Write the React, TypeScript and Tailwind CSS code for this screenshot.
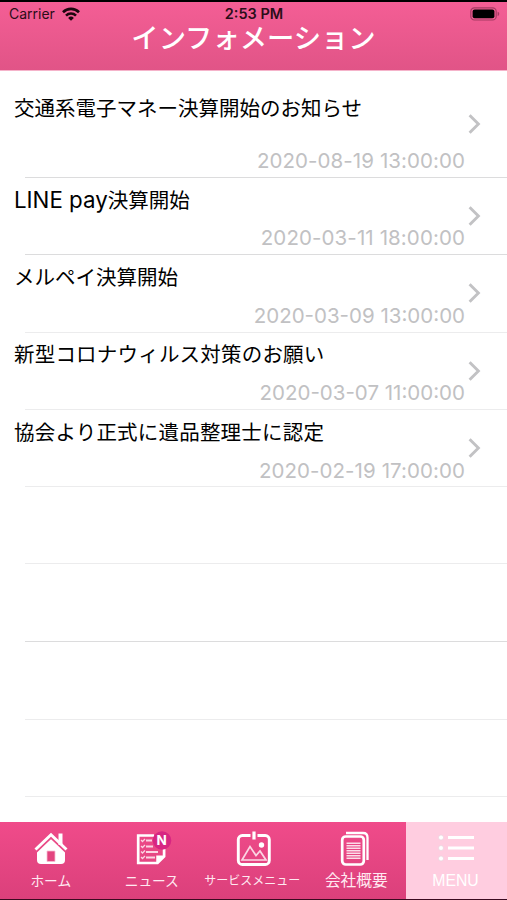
import React from 'react';

interface NewsItem {
  title: React.ReactNode;
  date: string;
  rowClass: string;
  titleClass: string;
  dateClass: string;
  lineClass: string;
}

const items: NewsItem[] = [
  {
    title: '交通系電子マネー決算開始のお知らせ',
    date: '2020-08-19 13:00:00',
    rowClass: 'h-[107px] pt-[23px]',
    titleClass: '',
    dateClass: 'bottom-[2px] tracking-[0.07px]',
    lineClass: 'bg-[#dcdcdd]',
  },
  {
    title: (
      <>
        <span className="text-[22.3px]">LINE pay</span>決算開始
      </>
    ),
    date: '2020-03-11 18:00:00',
    rowClass: 'h-[77px] pt-[7px]',
    titleClass: '',
    dateClass: 'bottom-[2px] tracking-[0.1px]',
    lineClass: 'bg-[#dcdcdd]',
  },
  {
    title: 'メルペイ決算開始',
    date: '2020-03-09 13:00:00',
    rowClass: 'h-[78px] pt-[8px]',
    titleClass: '',
    dateClass: 'bottom-[2px]',
    lineClass: 'bg-[#ececed]',
  },
  {
    title: '新型コロナウィルス対策のお願い',
    date: '2020-03-07 11:00:00',
    rowClass: 'h-[77px] pt-[7px]',
    titleClass: 'tracking-[0.2px]',
    dateClass: 'bottom-[2px]',
    lineClass: 'bg-[#ececed]',
  },
  {
    title: '協会より正式に遺品整理士に認定',
    date: '2020-02-19 17:00:00',
    rowClass: 'h-[77px] pt-[8px]',
    titleClass: 'tracking-[0.2px]',
    dateClass: 'bottom-[1px] tracking-[0.07px]',
    lineClass: 'bg-[#ececed]',
  },
];

const emptyRows = [
  'h-[77px] border-[#ececed]',
  'h-[78px] border-[#dcdcdd]',
  'h-[78px] border-[#ececed]',
  'h-[77px] border-[#ececed]',
];

const WifiIcon = () => (
  <svg width="18" height="14" viewBox="0 0 18 14" fill="none" stroke="#1c060e" strokeWidth="2.6">
    <path d="M1 5.2a11.4 11.4 0 0 1 16 0" />
    <path d="M4 8.6a7.1 7.1 0 0 1 10 0" />
    <path d="M9 13.8 6.1 10.9a4.1 4.1 0 0 1 5.8 0Z" fill="#1c060e" stroke="none" />
  </svg>
);

const BatteryIcon = () => (
  <svg width="31" height="14" viewBox="0 0 31 14">
    <rect x="0.8" y="0.8" width="25.4" height="12.2" rx="3.6" fill="none" stroke="#a63b63" strokeWidth="1.2" />
    <rect x="2.6" y="2.6" width="21.8" height="8.6" rx="2" fill="#000" />
    <path d="M27.6 4.8c2.2.5 2.2 3.7 0 4.2Z" fill="#a63b63" />
  </svg>
);

const ChevronIcon = () => (
  <svg width="13" height="20" viewBox="0 0 13 20" fill="none" stroke="#c2c2c4" strokeWidth="2.9">
    <path d="m1.6 1.2 8.8 8.8-8.8 8.8" />
  </svg>
);

const HomeIcon = () => (
  <svg width="34" height="34" viewBox="0 0 34 34">
    <path d="M17 7 3 19.5V28q0 4 4 4h20q4 0 4-4v-8.5Z" fill="#fff" />
    <path d="M1 19 17 3.5 33 19" fill="none" stroke="#e94b87" strokeWidth="5" />
    <path d="M24.5 1.5h4V13h-4z" fill="#fff" />
    <path d="M1.5 17.5 17 2.7l15.5 14.8" fill="none" stroke="#fff" strokeWidth="2.9" />
    <path d="M13 19h8v10.5h-8z" fill="#e3447f" stroke="#f8bdd3" strokeWidth="0.8" />
  </svg>
);

const NewsIcon = () => (
  <svg width="36" height="36" viewBox="0 0 36 36" fill="none" className="overflow-visible">
    <path d="M20 4.5H4.2V32h19.3l6.6-6.6V15" stroke="#fff" strokeWidth="2.7" />
    <path d="M23 32v-6.8h7" fill="#fff" stroke="#fff" strokeWidth="1.5" />
    <path d="M12 9.5h6M12 15.5h7M12 21h12M12 26.5h9" stroke="#fbd5e3" strokeWidth="1.9" />
    <path
      d="m7 9 1.5 1.5L11 8M7 15l1.5 1.5L11 14M7 20.5 8.5 22l2.5-2.5M7 26l1.5 1.5L11 25"
      stroke="#fbd5e3"
      strokeWidth="1.3"
    />
    <circle cx="28" cy="9.5" r="9.3" fill="#d72682" />
    <text
      x="27.7"
      y="14.3"
      textAnchor="middle"
      className="fill-white font-['Inter',sans-serif] text-[13.5px] font-bold"
    >
      N
    </text>
  </svg>
);

const ServiceIcon = () => (
  <svg width="36" height="36" viewBox="0 0 36 36" fill="none" stroke="#fff">
    <rect x="2.3" y="4.5" width="31" height="29" rx="4" strokeWidth="2.9" />
    <path d="M14.5 0h7v9h-7z" fill="#ea4c88" stroke="none" />
    <path d="M18 0.5v8" strokeWidth="3.2" />
    <path d="m6 29 8-13.5 6 9 4-4.5 6 9Z" stroke="#fbd5e3" strokeWidth="1.7" />
    <circle cx="25.5" cy="14" r="2.7" fill="#fff" stroke="none" />
  </svg>
);

const CompanyIcon = () => (
  <svg width="30" height="36" viewBox="0 0 30 36" fill="none" stroke="#fff">
    <path d="M6 2h17q4.5 0 4.5 4.5V29" strokeWidth="2.3" />
    <rect x="2.2" y="5.5" width="21.6" height="28" rx="3.5" strokeWidth="2.7" />
    <path
      d="M6.5 12.2h14M6.5 14.7h14M6.5 17.2h14M6.5 19.7h14M6.5 22.2h14M6.5 24.7h14M6.5 27.2h14"
      stroke="#fcdce8"
      strokeWidth="1.6"
    />
  </svg>
);

const MenuIcon = () => (
  <svg width="38" height="30" viewBox="0 0 38 30" stroke="#fff" strokeWidth="3">
    <path d="M11 4.5h26M11 15h26M11 25.5h26" />
    <g fill="#fff" stroke="#ead3dd" strokeWidth="0.7">
      <circle cx="4" cy="4.5" r="2.5" />
      <circle cx="4" cy="15" r="2.5" />
      <circle cx="4" cy="25.5" r="2.5" />
    </g>
  </svg>
);

const tabs = [
  { label: 'ホーム', icon: <HomeIcon />, labelClass: 'text-[13.7px]' },
  { label: 'ニュース', icon: <NewsIcon />, labelClass: 'text-[13.7px] -ml-[1px]' },
  { label: 'サービスメニュー', icon: <ServiceIcon />, labelClass: 'text-[12px] -ml-[3px]' },
  { label: '会社概要', icon: <CompanyIcon />, labelClass: 'text-[15.7px] ml-[2px]' },
];

const NewsRow = ({ title, date, rowClass, titleClass, dateClass, lineClass }: NewsItem) => (
  <li className={`relative shrink-0 pl-[14px] ${rowClass}`}>
    <p className={`text-[20.5px] leading-[30px] whitespace-nowrap text-black ${titleClass}`}>{title}</p>
    <time className={`absolute right-[42px] text-[20.5px] leading-[30px] whitespace-nowrap text-[#c1c1c3] ${dateClass}`}>
      {date}
    </time>
    <span className="absolute top-0 bottom-[2px] right-[26px] flex items-center">
      <ChevronIcon />
    </span>
    <span className={`absolute bottom-0 left-[25px] right-0 h-px ${lineClass}`} />
  </li>
);

const App = () => {
  return (
    <div className="flex h-[900px] w-[507px] flex-col overflow-hidden bg-white font-['Inter','Noto_Sans_CJK_JP',sans-serif]">
      <header className="h-[71px] shrink-0 border-t-2 border-b border-t-black border-b-[#f5b3ca] bg-linear-to-b from-[#f45e95] to-[#e15487]">
        <div className="grid h-[23px] grid-cols-3 items-center pl-[9px] pr-[6px] text-[14px] text-[#2b0d18]">
          <div className="flex items-center gap-[7px]">
            <span>Carrier</span>
            <WifiIcon />
          </div>
          <span className="-ml-[2px] text-center text-[14.5px] font-semibold">2:53 PM</span>
          <span className="flex justify-end">
            <BatteryIcon />
          </span>
        </div>
        <h1 className="-mt-[6px] text-center text-[27.3px] leading-[40px] font-medium text-white">
          インフォメーション
        </h1>
      </header>

      <ul className="flex min-h-0 flex-1 flex-col overflow-hidden">
        {items.map((item) => (
          <NewsRow key={item.date} {...item} />
        ))}
        {emptyRows.map((row, i) => (
          <li key={i} className={`ml-[25px] shrink-0 border-b ${row}`} />
        ))}
      </ul>

      <nav className="flex h-[78px] shrink-0 border-b border-[#3a0a20] bg-linear-to-b from-[#f04b8a] to-[#db407b] text-[#ffe9f1]">
        {tabs.map(({ label, icon, labelClass }) => (
          <div key={label} className="flex w-[101.5px] flex-col items-center pt-[9px]">
            <span className="flex h-[36px] items-center">{icon}</span>
            <span className={`mt-[4px] leading-[20px] whitespace-nowrap ${labelClass}`}>{label}</span>
          </div>
        ))}
        <div className="flex flex-1 flex-col items-center bg-[#ffcde0] pt-[8px] pr-[2px] text-white">
          <span className="flex h-[36px] items-center">
            <MenuIcon />
          </span>
          <span className="mt-[5px] text-[15.8px] leading-[20px] font-['Liberation_Sans',sans-serif]">MENU</span>
        </div>
      </nav>
    </div>
  );
};

export default App;
